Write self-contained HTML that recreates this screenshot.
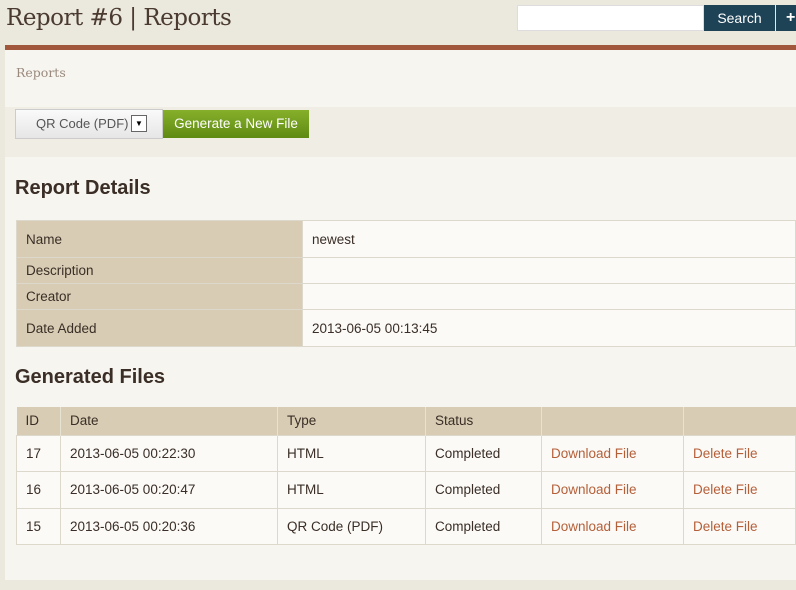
<!DOCTYPE html>
<html><head><style>
*{margin:0;padding:0;box-sizing:border-box}
body{width:796px;height:590px;background:#ebe8dd;font-family:"Liberation Sans",sans-serif;color:#3a2e26;position:relative;overflow:hidden;font-size:14px}
.abs{position:absolute}
h1{position:absolute;left:6px;top:5px;font-family:"DejaVu Serif","Liberation Serif",serif;font-weight:normal;font-size:23px;color:#4a3a30;letter-spacing:-0.5px}
.panel{position:absolute;left:5px;top:45px;width:791px;height:535px;background:#f6f5ef;border-top:5px solid #a0573c}
table{border-collapse:collapse;position:absolute;font-size:13.5px}
td{border:1px solid #dcd8cc;padding:0 9px;background:#fbfaf7}
td.l{background:#d8cdb4}
th{background:#d8cdb4;text-align:left;font-weight:normal;padding:0 9px;border-left:1px solid #e8e2d2}
a{color:#b55f38;text-decoration:none}
h2{position:absolute;font-size:20px;font-weight:bold;color:#3a2e26}
</style></head><body>
<h1>Report #6 | Reports</h1>
<div class="abs" style="left:517px;top:5px;width:187px;height:26px;background:#fff;border:1px solid #ddd"></div>
<div class="abs" style="left:704px;top:5px;width:71px;height:26px;background:#1e4256;color:#fff;font-size:14px;text-align:center;line-height:26px">Search</div>
<div class="abs" style="left:776px;top:5px;width:20px;height:26px;background:#1e4256;color:#fff;font-weight:bold;font-size:16px;line-height:26px;padding-left:10px">+</div>
<div class="panel"></div>
<div class="abs" style="left:16px;top:65px;font-family:'DejaVu Serif',serif;font-size:12.5px;color:#9a8a7e">Reports</div>
<div class="abs" style="left:5px;top:107px;width:791px;height:50px;background:#efede4"></div>
<div class="abs" style="left:15px;top:109px;width:148px;height:30px;background:linear-gradient(#fafafa,#e6e6e6);border:1px solid #ccc;font-size:13px;line-height:28px;padding-left:20px;color:#555">QR Code (PDF)<span style="position:absolute;left:115px;top:5px;width:16px;height:17px;border:1px solid #666;background:#fff;font-size:8px;line-height:15px;text-align:center;color:#000">▼</span></div>
<div class="abs" style="left:163px;top:110px;width:146px;height:28px;background:linear-gradient(#86b02a,#5f8a12);color:#fff;font-size:13.5px;line-height:28px;text-align:center">Generate a New File</div>
<h2 style="left:15px;top:177px">Report Details</h2>
<table style="left:16px;top:220px;width:780px">
<tr style="height:37px"><td class="l" style="width:286px">Name</td><td>newest</td></tr>
<tr style="height:26px"><td class="l">Description</td><td></td></tr>
<tr style="height:26px"><td class="l">Creator</td><td></td></tr>
<tr style="height:37px"><td class="l">Date Added</td><td>2013-06-05 00:13:45</td></tr>
</table>
<h2 style="left:15px;top:366px">Generated Files</h2>
<table style="left:16px;top:407px;width:780px">
<tr style="height:28px"><th style="width:44px;border-left:none">ID</th><th style="width:217px">Date</th><th style="width:148px">Type</th><th style="width:116px">Status</th><th style="width:142px"></th><th></th></tr>
<tr style="height:36px"><td>17</td><td>2013-06-05 00:22:30</td><td>HTML</td><td>Completed</td><td><a>Download File</a></td><td><a>Delete File</a></td></tr>
<tr style="height:37px"><td>16</td><td>2013-06-05 00:20:47</td><td>HTML</td><td>Completed</td><td><a>Download File</a></td><td><a>Delete File</a></td></tr>
<tr style="height:36px"><td>15</td><td>2013-06-05 00:20:36</td><td>QR Code (PDF)</td><td>Completed</td><td><a>Download File</a></td><td><a>Delete File</a></td></tr>
</table>
</body></html>
